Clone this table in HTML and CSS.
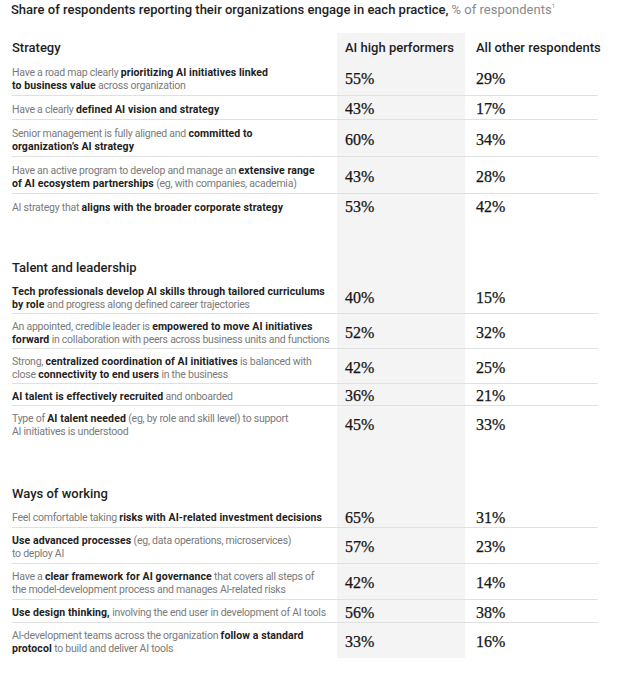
FILE: index.html
```html
<!DOCTYPE html>
<html lang="en">
<head>
<meta charset="utf-8">
<title>AI high performers practices</title>
<link rel="stylesheet" href="styles.css">
</head>
<body>
<h1 class="title">Share of respondents reporting their organizations engage in each practice, <span class="unit">% of respondents<sup>1</sup></span></h1>

<div class="table">
  <section class="section strategy">
    <div class="head">
      <div class="head-label">Strategy</div>
      <div class="head-col first">AI high performers</div>
      <div class="head-col">All other respondents</div>
    </div>
    <div class="row">
      <div class="label">Have a road map clearly <b>prioritizing AI initiatives linked<br>to business value</b> across organization</div>
      <div class="num first">55%</div>
      <div class="num">29%</div>
    </div>
    <div class="row">
      <div class="label">Have a clearly <b>defined AI vision and strategy</b></div>
      <div class="num first">43%</div>
      <div class="num">17%</div>
    </div>
    <div class="row">
      <div class="label">Senior management is fully aligned and <b>committed to<br>organization’s AI strategy</b></div>
      <div class="num first">60%</div>
      <div class="num">34%</div>
    </div>
    <div class="row">
      <div class="label">Have an active program to develop and manage an <b>extensive range<br>of AI ecosystem partnerships</b> (eg, with companies, academia)</div>
      <div class="num first">43%</div>
      <div class="num">28%</div>
    </div>
    <div class="row">
      <div class="label">AI strategy that <b>aligns with the broader corporate strategy</b></div>
      <div class="num first">53%</div>
      <div class="num">42%</div>
    </div>
  </section>

  <section class="section talent">
    <div class="head">
      <div class="head-label">Talent and leadership</div>
      <div class="head-col first"></div>
      <div class="head-col"></div>
    </div>
    <div class="row">
      <div class="label"><b>Tech professionals develop AI skills through tailored curriculums<br>by role</b> and progress along defined career trajectories</div>
      <div class="num first">40%</div>
      <div class="num">15%</div>
    </div>
    <div class="row">
      <div class="label">An appointed, credible leader is <b>empowered to move AI initiatives<br>forward</b> in collaboration with peers across business units and functions</div>
      <div class="num first">52%</div>
      <div class="num">32%</div>
    </div>
    <div class="row">
      <div class="label">Strong, <b>centralized coordination of AI initiatives</b> is balanced with<br>close <b>connectivity to end users</b> in the business</div>
      <div class="num first">42%</div>
      <div class="num">25%</div>
    </div>
    <div class="row">
      <div class="label"><b>AI talent is effectively recruited</b> and onboarded</div>
      <div class="num first">36%</div>
      <div class="num">21%</div>
    </div>
    <div class="row">
      <div class="label">Type of <b>AI talent needed</b> (eg, by role and skill level) to support<br>AI initiatives is understood</div>
      <div class="num first">45%</div>
      <div class="num">33%</div>
    </div>
  </section>

  <section class="section ways">
    <div class="head">
      <div class="head-label">Ways of working</div>
      <div class="head-col first"></div>
      <div class="head-col"></div>
    </div>
    <div class="row">
      <div class="label">Feel comfortable taking <b>risks with AI-related investment decisions</b></div>
      <div class="num first">65%</div>
      <div class="num">31%</div>
    </div>
    <div class="row">
      <div class="label"><b>Use advanced processes</b> (eg, data operations, microservices)<br>to deploy AI</div>
      <div class="num first">57%</div>
      <div class="num">23%</div>
    </div>
    <div class="row">
      <div class="label">Have a <b>clear framework for AI governance</b> that covers all steps of<br>the model-development process and manages AI-related risks</div>
      <div class="num first">42%</div>
      <div class="num">14%</div>
    </div>
    <div class="row">
      <div class="label"><b>Use design thinking,</b> involving the end user in development of AI tools</div>
      <div class="num first">56%</div>
      <div class="num">38%</div>
    </div>
    <div class="row">
      <div class="label">AI-development teams across the organization <b>follow a standard<br>protocol</b> to build and deliver AI tools</div>
      <div class="num first">33%</div>
      <div class="num">16%</div>
    </div>
  </section>
</div>
</body>
</html>
```

FILE: styles.css
```css
html, body {
  margin: 0;
  padding: 0;
  background: #ffffff;
}

body {
  font-family: Roboto, "Liberation Sans", Arial, sans-serif;
  color: #222222;
  padding: 2px 0 0 11px;
  width: 609px;
}

.title {
  margin: 0;
  font-size: 13px;
  line-height: 15px;
  font-weight: 500;
  color: #1e1e1e;
  white-space: nowrap;
}

.title .unit {
  font-weight: 400;
  color: #8a8a8a;
}

.title sup {
  font-size: 6px;
  line-height: 0;
  vertical-align: 6px;
}

.table {
  margin-top: 16px;
  margin-left: 1px;
  width: 586px;
  background: linear-gradient(to right,
    transparent 0, transparent 325px,
    #f4f4f5 325px, #f4f4f5 453px,
    transparent 453px);
}

.section + .section {
  margin-top: 38px;
}

.ways {
  margin-top: 41px !important;
}

.head,
.row {
  display: grid;
  grid-template-columns: 325px 128px 133px;
}

.head {
  padding: 5px 0 4px;
  font-size: 13px;
  line-height: 15px;
  font-weight: 500;
  color: #1e1e1e;
}

.strategy .head {
  padding: 7px 0 4px;
}

.head-col {
  padding-left: 8px;
  white-space: nowrap;
}

.head-col + .head-col {
  padding-left: 11px;
}

.row {
  border-bottom: 1px solid #e0e0e0;
}

.row:last-child {
  border-bottom: none;
}

.label {
  font-size: 10.5px;
  line-height: 13px;
  color: #7a7a7a;
  letter-spacing: -0.25px;
  white-space: nowrap;
  padding: 6px 0 3px;
}

.strategy .label {
  padding: 7px 0 3px;
}

.talent .label {
  padding: 6px 0 2px;
}

.label b {
  font-weight: 700;
  color: #222222;
  letter-spacing: 0.1px;
}

.num {
  display: flex;
  align-items: center;
  padding: 3px 0 0 11px;
  font-family: "Liberation Serif", "Times New Roman", serif;
  font-size: 16px;
  color: #161616;
  -webkit-text-stroke: 0.25px #161616;
}

.num.first {
  padding-left: 8px;
}
```
